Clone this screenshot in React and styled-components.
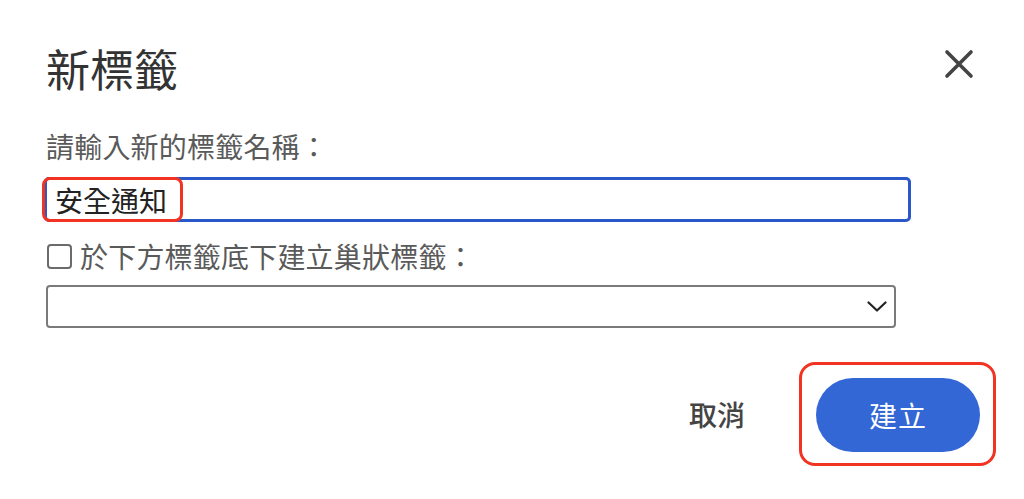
import React from "react"
import styled, { createGlobalStyle } from "styled-components"

const GlobalStyle = createGlobalStyle`
  html, body {
    margin: 0;
    padding: 0;
    background: #ffffff;
  }
  body {
    font-family: "Noto Sans", "Noto Sans CJK TC", sans-serif;
  }
`

const Dialog = styled.div`
  box-sizing: border-box;
  width: 1024px;
  height: 499px;
  padding: 46px 28px 0 46px;
  display: flex;
  flex-direction: column;
  font-family: "Noto Sans CJK TC", "Noto Sans", sans-serif;
`

const Header = styled.div`
  display: flex;
  flex-direction: row;
  justify-content: space-between;
  align-items: center;
  height: 44px;
`

const Title = styled.h1`
  margin: 0;
  font-size: 44px;
  line-height: 44px;
  font-weight: 400;
  color: #333333;
`

const CloseButton = styled.button`
  width: 32px;
  height: 32px;
  margin-right: 21px;
  margin-top: -8px;
  padding: 0;
  border: none;
  background: none;
  display: flex;
  align-items: center;
  justify-content: center;
  cursor: pointer;
`

const Label = styled.div`
  margin-top: 42px;
  font-size: 28px;
  line-height: 28px;
  color: #5a5a5a;
  letter-spacing: 0.2px;
`

const FieldWrap = styled.div`
  position: relative;
  margin-top: 17px;
  margin-left: -2px;
  width: 867px;
`

const TextField = styled.div`
  box-sizing: border-box;
  height: 45px;
  border: 3px solid #2b58c8;
  border-radius: 5px;
  padding-left: 8px;
  display: flex;
  align-items: center;
  font-size: 28px;
  color: #222222;
`

const Highlight = styled.div`
  position: absolute;
  box-sizing: border-box;
  left: -2px;
  top: 0;
  width: 141px;
  height: 45px;
  border: 3px solid ${props => props.color};
  border-radius: 8px;
  pointer-events: none;
`

const CheckRow = styled.label`
  margin-top: 20px;
  display: flex;
  flex-direction: row;
  align-items: center;
  gap: 8px;
  height: 28px;
  font-size: 28px;
  line-height: 28px;
  color: #5a5a5a;
  letter-spacing: 0.2px;
`

const CheckBox = styled.span`
  box-sizing: border-box;
  display: inline-block;
  width: 25px;
  height: 25px;
  margin-left: 1px;
  border: 2px solid #6b6b6b;
  border-radius: 4px;
`

const Select = styled.div`
  box-sizing: border-box;
  margin-top: 15px;
  width: 850px;
  height: 43px;
  border: 2px solid #7a7a7a;
  border-radius: 4px;
  display: flex;
  align-items: center;
  justify-content: flex-end;
  padding-right: 7px;
`

const Footer = styled.div`
  margin-top: 34px;
  display: flex;
  flex-direction: row;
  justify-content: flex-end;
  align-items: center;
  gap: 54px;
`

const CancelButton = styled.button`
  padding: 0;
  border: none;
  background: none;
  font-family: inherit;
  font-size: 28px;
  font-weight: 500;
  color: #444444;
  cursor: pointer;
`

const ActionFrame = styled.div`
  border: 3px solid #f23322;
  border-radius: 16px;
  padding: 13px 13px 11px 14px;
`

const PrimaryButton = styled.button`
  display: block;
  width: 164px;
  height: 74px;
  border: none;
  border-radius: 37px;
  background-color: #3467d6;
  color: #ffffff;
  font-family: inherit;
  font-size: 28px;
  font-weight: 400;
  letter-spacing: 1px;
  cursor: pointer;
`

const App = () => {
  return (
    <>
      <GlobalStyle />
      <Dialog>
        <Header>
          <Title>新標籤</Title>
          <CloseButton aria-label="關閉">
            <svg width="30" height="30" viewBox="0 0 30 30">
              <path
                d="M3 3 L27 27 M27 3 L3 27"
                stroke="#444444"
                strokeWidth="3.6"
                strokeLinecap="round"
              />
            </svg>
          </CloseButton>
        </Header>
        <Label>請輸入新的標籤名稱：</Label>
        <FieldWrap>
          <TextField>安全通知</TextField>
          <Highlight color="#f23322" />
        </FieldWrap>
        <CheckRow>
          <CheckBox />
          於下方標籤底下建立巢狀標籤：
        </CheckRow>
        <Select>
          <svg width="20" height="11" viewBox="0 0 20 11">
            <path
              d="M1.5 1.5 L10 9.5 L18.5 1.5"
              fill="none"
              stroke="#222222"
              strokeWidth="2.2"
              strokeLinecap="round"
              strokeLinejoin="round"
            />
          </svg>
        </Select>
        <Footer>
          <CancelButton>取消</CancelButton>
          <ActionFrame>
            <PrimaryButton>建立</PrimaryButton>
          </ActionFrame>
        </Footer>
      </Dialog>
    </>
  )
}

export default App
